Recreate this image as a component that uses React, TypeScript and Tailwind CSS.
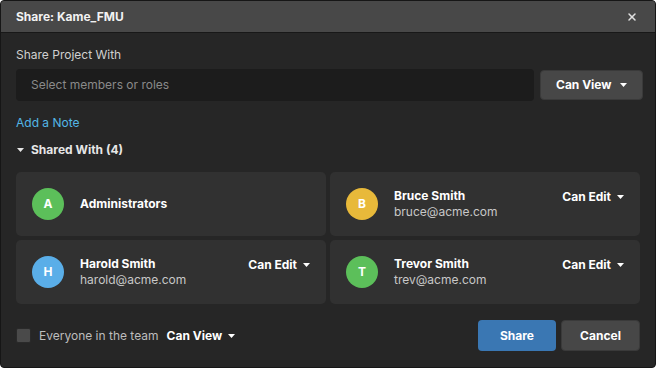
import { X } from "lucide-react";

type Person = {
  initial: string;
  name: string;
  email?: string;
  color: string;
  role?: string;
};

const people: Person[] = [
  { initial: "A", name: "Administrators", color: "bg-[#5cbf5a]" },
  { initial: "B", name: "Bruce Smith", email: "bruce@acme.com", color: "bg-[#e8b93a]", role: "Can Edit" },
  { initial: "H", name: "Harold Smith", email: "harold@acme.com", color: "bg-[#5aaee8]", role: "Can Edit" },
  { initial: "T", name: "Trevor Smith", email: "trev@acme.com", color: "bg-[#5cbf5a]", role: "Can Edit" },
];

function Caret({ className = "" }: { className?: string }) {
  return (
    <svg width="7" height="4" viewBox="0 0 7 4" className={className}>
      <path d="M0 0h7L3.5 4z" fill="currentColor" />
    </svg>
  );
}

function PersonCard({ p }: { p: Person }) {
  return (
    <div className="flex h-16 items-center rounded-[5px] bg-[#313131] pl-4 pr-[16px]">
      <div
        className={`flex h-8 w-8 shrink-0 items-center justify-center rounded-full text-[12px] font-bold text-white ${p.color}`}
      >
        {p.initial}
      </div>
      <div className="ml-4 flex min-w-0 flex-1 flex-col leading-[16px]">
        <span className="text-[12px] font-bold text-white">{p.name}</span>
        {p.email && <span className="text-[12px] text-[#c8c8c8]">{p.email}</span>}
      </div>
      {p.role && (
        <div className="flex items-center gap-[6px] self-start pt-[16px] text-[12px] font-bold text-white">
          {p.role}
          <Caret />
        </div>
      )}
    </div>
  );
}

export default function App() {
  return (
    <div
      className="flex h-[368px] w-[656px] flex-col overflow-hidden rounded-[4px] border border-[#161616] bg-[#262626] text-white"
      style={{ fontFamily: "Inter, 'Noto Sans', sans-serif" }}
    >
      <div className="flex h-[32px] shrink-0 items-center justify-between border-b border-[#181818] bg-[#484848] pl-[15px] pr-[17px]">
        <span className="text-[12px] font-bold text-[#f2f2f2]">Share: Kame_FMU</span>
        <X className="h-[12px] w-[12px] text-[#e0e0e0]" strokeWidth={3} />
      </div>

      <div className="flex flex-1 flex-col px-[15px]">
        <div className="mt-[13px] text-[12px] text-[#d0d0d0]">Share Project With</div>
        <div className="mr-[-3px] mt-[5px] flex items-center gap-[6px]">
          <div className="flex h-[32px] flex-1 items-center rounded-[4px] bg-[#1c1c1c] pl-[15px] text-[12px] text-[#8a8a8a]">
            Select members or roles
          </div>
          <div className="flex h-[30px] w-[103px] items-center justify-between rounded-[4px] border border-[#3a3a3a] bg-[#474747] pl-[15px] pr-[15px] text-[12px] font-bold text-white">
            Can View
            <Caret />
          </div>
        </div>

        <div className="mt-[13px] text-[12px] text-[#53b7e6]">Add a Note</div>

        <div className="mt-[9px] flex items-center text-[12px] font-bold text-[#e6e6e6]">
          <Caret className="ml-[1px] mr-[7px]" />
          Shared With (4)
        </div>

        <div className="mt-[13px] grid grid-cols-2 gap-1">
          {people.map((p) => (
            <PersonCard key={p.name} p={p} />
          ))}
        </div>

        <div className="mt-[16px] flex items-center">
          <div className="h-[15px] w-[15px] rounded-[2px] border border-[#2a2a2a] bg-[#4a4a4a]" />
          <span className="ml-[8px] text-[12px] text-[#bdbdbd]">Everyone in the team</span>
          <span className="ml-[8px] flex items-center gap-[6px] text-[12px] font-bold text-white">
            Can View
            <Caret />
          </span>
          <div className="ml-auto flex gap-[5px]">
            <button className="h-[31px] w-[78px] rounded-[4px] bg-[#3a77b3] text-[12px] font-bold text-white">
              Share
            </button>
            <button className="h-[31px] w-[79px] rounded-[4px] border border-[#3a3a3a] bg-[#474747] text-[12px] font-bold text-white">
              Cancel
            </button>
          </div>
        </div>
      </div>
    </div>
  );
}
